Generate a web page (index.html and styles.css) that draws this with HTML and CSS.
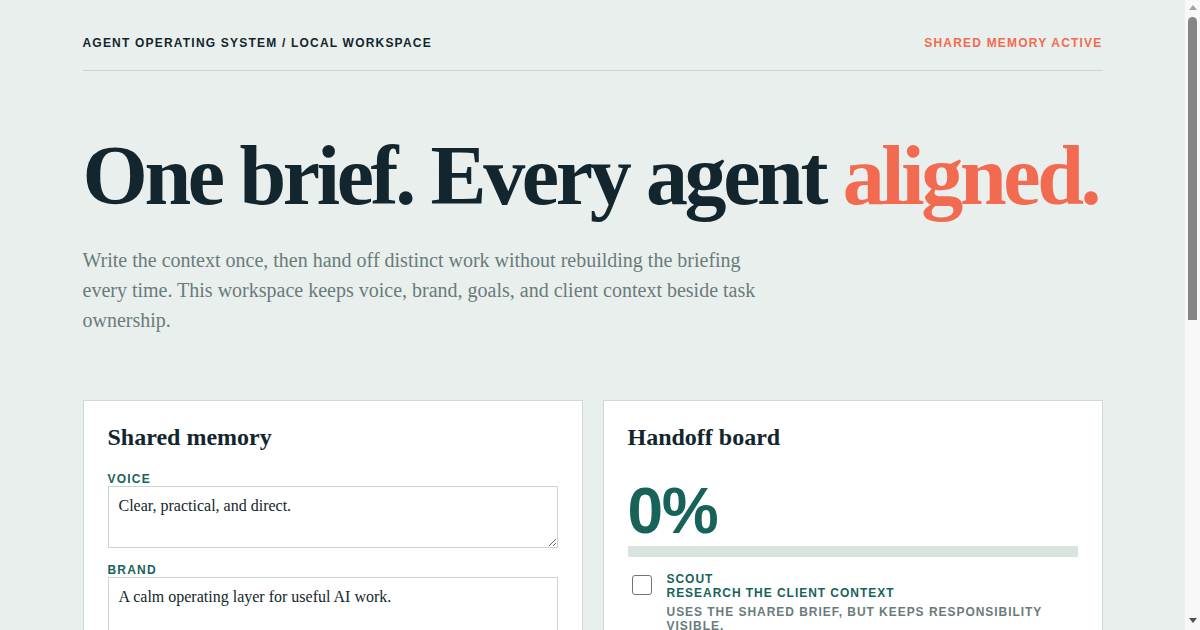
FILE: index.html
```html
<!DOCTYPE html>
<html lang="en">
<head>
  <meta charset="UTF-8">
  <meta name="viewport" content="width=device-width, initial-scale=1.0">
  <title>Agent Operating System</title>
  <link rel="stylesheet" href="styles.css">
</head>
<body>
  <div class="page">
    <header class="topbar">
      <span class="crumb">Agent operating system / local workspace</span>
      <span class="status">Shared memory active</span>
    </header>

    <section class="hero">
      <h1>One brief. Every agent <em>aligned.</em></h1>
      <p>Write the context once, then hand off distinct work without rebuilding the briefing every time. This workspace keeps voice, brand, goals, and client context beside task ownership.</p>
    </section>

    <main class="grid">
      <!-- Shared memory fields -->
      <section class="card">
        <h2>Shared memory</h2>
        <label class="field">
          <span>Voice</span>
          <textarea rows="2">Clear, practical, and direct.</textarea>
        </label>
        <label class="field">
          <span>Brand</span>
          <textarea rows="2">A calm operating layer for useful AI work.</textarea>
        </label>
        <label class="field">
          <span>Goals</span>
          <textarea rows="2">Ship focused work with less repeated explanation.</textarea>
        </label>
        <label class="field">
          <span>Client context</span>
          <textarea rows="3">Small team, busy week, needs clear next steps.</textarea>
        </label>
      </section>

      <!-- Handoff board -->
      <section class="card">
        <h2>Handoff board</h2>
        <div class="percent">0%</div>
        <div class="progress"><div class="progress-fill" style="width: 0%"></div></div>
        <ul class="tasks">
          <li class="task">
            <input type="checkbox">
            <div class="task-text">
              <span class="agent">Scout</span>
              <strong>Research the client context</strong>
              <small>Uses the shared brief, but keeps responsibility visible.</small>
            </div>
          </li>
          <li class="task">
            <input type="checkbox">
            <div class="task-text">
              <span class="agent">Writer</span>
              <strong>Draft the launch note</strong>
              <small>Uses the shared brief, but keeps responsibility visible.</small>
            </div>
          </li>
          <li class="task">
            <input type="checkbox">
            <div class="task-text">
              <span class="agent">Editor</span>
              <strong>Check tone against the voice</strong>
              <small>Uses the shared brief, but keeps responsibility visible.</small>
            </div>
          </li>
          <li class="task">
            <input type="checkbox">
            <div class="task-text">
              <span class="agent">Operator</span>
              <strong>Package the handoff</strong>
              <small>Uses the shared brief, but keeps responsibility visible.</small>
            </div>
          </li>
        </ul>
      </section>
    </main>
  </div>

  <!-- Window scrollbar as seen in the capture -->
  <div class="scrollbar" aria-hidden="true">
    <span class="arrow up"></span>
    <span class="thumb"></span>
    <span class="arrow down"></span>
  </div>
</body>
</html>
```

FILE: styles.css
```css
* {
  margin: 0;
  padding: 0;
  box-sizing: border-box;
}

body {
  background-color: #e9efed;
  color: #13262d;
  font-family: 'Liberation Serif', 'Times New Roman', serif;
  padding-right: 15px;
}

.page {
  max-width: 1020px;
  margin: 0 auto;
  padding-bottom: 80px;
}

/* Top bar */
.topbar {
  display: flex;
  justify-content: space-between;
  align-items: center;
  padding: 36px 0 20px;
  border-bottom: 1px solid #c9d6d2;
  font-family: 'Liberation Sans', Arial, sans-serif;
  font-size: 12px;
  font-weight: bold;
  letter-spacing: 0.1em;
  text-transform: uppercase;
}

.status {
  color: #f26b50;
}

/* Hero */
.hero {
  padding: 59px 0 65px;
}

.hero h1 {
  font-size: 84px;
  line-height: 1.1;
  letter-spacing: -0.04em;
  font-weight: bold;
  white-space: nowrap;
}

.hero h1 em {
  font-style: normal;
  color: #f26b50;
}

.hero p {
  max-width: 685px;
  margin-top: 23px;
  font-size: 20px;
  line-height: 30px;
  color: #6a7b7b;
}

/* Cards */
.grid {
  display: grid;
  grid-template-columns: 1fr 1fr;
  gap: 20px;
  align-items: start;
}

.card {
  background: #fff;
  border: 1px solid #cdd9d5;
  padding: 24px;
}

.card h2 {
  font-size: 24px;
  line-height: 24px;
  margin-bottom: 23px;
}

.field {
  display: block;
  margin-bottom: 15px;
}

.field span {
  display: block;
  font-family: 'Liberation Sans', Arial, sans-serif;
  font-size: 12px;
  font-weight: bold;
  letter-spacing: 0.1em;
  text-transform: uppercase;
  color: #17635a;
  line-height: 14px;
}

.field textarea {
  display: block;
  width: 100%;
  height: 62px;
  padding: 8px 10px;
  border: 1px solid #c9d6d2;
  font-family: 'Liberation Serif', 'Times New Roman', serif;
  font-size: 16px;
  line-height: 22px;
  color: #13262d;
  resize: vertical;
}

.percent {
  font-family: 'Liberation Sans', Arial, sans-serif;
  font-size: 64px;
  font-weight: bold;
  line-height: 64px;
  color: #17635a;
  letter-spacing: -0.02em;
  margin-top: 30px;
}

.progress {
  height: 11px;
  background: #d9e4df;
  margin: 3px 0 15px;
}

.progress-fill {
  height: 100%;
  background: #17635a;
}

.tasks {
  list-style: none;
}

.task {
  display: flex;
  gap: 15px;
  padding: 0 4px 18px;
}

.task input {
  appearance: none;
  flex: none;
  width: 20px;
  height: 20px;
  margin-top: 3px;
  border: 1px solid #6f7678;
  border-radius: 3px;
  background: #fff;
}

.task-text {
  display: flex;
  flex-direction: column;
  font-family: 'Liberation Sans', Arial, sans-serif;
  font-size: 12px;
  font-weight: bold;
  letter-spacing: 0.08em;
  text-transform: uppercase;
  line-height: 14px;
  color: #17635a;
}

.task-text small {
  font-size: 12px;
  color: #6a7b7b;
  margin-top: 5px;
}

/* Scrollbar */
.scrollbar {
  position: fixed;
  top: 0;
  right: 0;
  width: 15px;
  height: 100vh;
  background: #f8f8f8;
  display: flex;
  flex-direction: column;
  align-items: center;
}

.scrollbar .thumb {
  width: 9px;
  height: 303px;
  margin-top: 7px;
  background: #858585;
  border-radius: 5px 5px 0 0;
}

.scrollbar .arrow {
  width: 0;
  height: 0;
  border-left: 4px solid transparent;
  border-right: 4px solid transparent;
}

.scrollbar .up {
  margin-top: 5px;
  border-bottom: 5px solid #a3a3a3;
}

.scrollbar .down {
  margin-top: auto;
  margin-bottom: 7px;
  border-top: 5px solid #505050;
}
```
